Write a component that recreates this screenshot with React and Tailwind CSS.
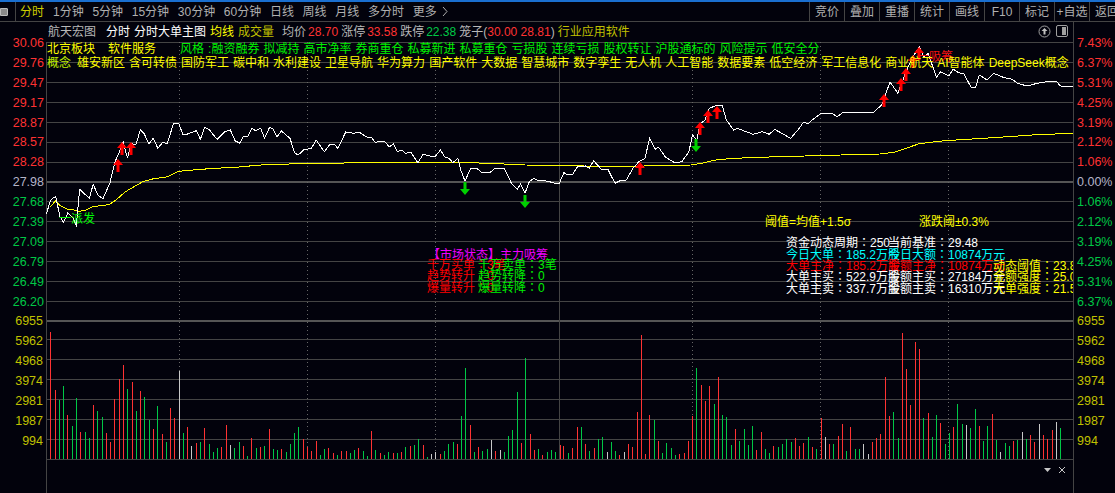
import React from "react";

const P1 = [[130,282],[140,245],[146,236],[156,230],[168,290],[178,307],[190,278],[203,292],[214,316],[223,208],[250,235],[261,193],[274,225],[288,236],[308,188],[322,125],[333,100],[345,65],[357,115],[367,70],[380,75],[393,30],[404,42],[417,72],[429,55],[442,85],[456,66],[468,72],[486,10],[500,10],[513,45],[525,42],[550,32],[561,58],[573,22],[585,28],[608,58],[630,35],[645,30],[658,62],[672,70],[681,50],[693,50],[705,25],[716,32],[730,25],[741,55],[755,22],[765,28],[776,50],[788,33],[812,55],[825,98],[835,105],[850,90],[872,85],[885,60],[908,95],[922,75],[935,72],[946,85],[968,36],[990,40],[1005,36],[1030,53],[1040,52],[1050,67],[1075,63],[1090,80],[1102,72],[1113,95],[1125,90],[1135,100],[1150,96],[1170,128],[1185,103],[1205,108],[1220,108],[1233,90],[1245,110],[1258,116],[1268,128],[1282,115],[1290,150],[1302,183],[1318,145],[1335,145],[1350,158],[1372,158],[1385,145],[1412,145],[1432,190],[1448,208],[1458,192],[1470,220],[1482,185],[1495,175],[1510,183],[1525,182],[1545,187],[1560,192]];
const P2 = [[12,190],[25,158],[35,165],[50,162],[63,140],[85,138],[96,145],[108,122],[130,148],[148,148],[168,190],[182,182],[200,180],[218,145],[235,125],[252,115],[265,55],[280,88],[290,82],[310,112],[335,128],[355,125],[375,95],[385,45],[397,60],[406,12]];
const P3 = [[420,360],[432,325],[450,317],[468,316],[480,360],[500,390],[510,385],[555,403],[580,395],[600,403],[615,388],[660,415],[680,390],[695,368],[710,370],[720,360],[745,340],[775,340],[790,350],[805,338],[890,338],[915,315],[938,246],[960,280],[965,265],[985,210],[1000,175],[1020,140],[1032,172],[1045,160],[1068,232],[1080,215],[1103,228],[1115,207],[1130,218],[1145,222],[1165,262],[1178,262],[1188,225],[1210,240],[1228,220],[1255,232],[1280,238],[1295,250],[1322,258],[1350,250],[1385,244],[1405,245],[1415,258],[1450,259]];
const A1 = [[140,262],[155,243],[170,258],[190,268],[205,269],[220,274],[240,271],[260,260],[280,257],[305,254],[325,240],[350,216],[375,200],[400,185],[430,176],[470,170],[500,154],[530,151],[600,145],[660,142],[720,136],[760,133],[860,131],[1010,128],[1270,127],[1370,130],[1470,135],[1560,136]];
const A2 = [[0,136],[160,140],[220,140],[250,138],[380,135],[410,130],[450,120],[500,115],[600,111],[700,108],[800,105],[910,102],[950,97],[1020,71],[1090,62],[1200,55],[1350,44],[1450,40]];

const toL = ([x, y]) => [x / 2.8, 120 + y / 3];
const toR = ([x, y]) => [555 + x / 2.8, 120 + y / 3];
const toT = ([x, y]) => [555 + x / 2.8, y / 3];
const pts = (a) => a.map(([x, y]) => `${x.toFixed(1)},${y.toFixed(1)}`).join(" ");
const price = [...P1.map(toL), ...P2.map(toR), ...P3.map(toT)];
const avg = [...A1.map(toL), ...A2.map(toR)];

const V1 = "141r66 155r240 166g270 177g228 188r315 202g348 214g264 225r366 239g366 250g384 261r285 272g303 286g321 297r369 309r396 320r267 334r207 345r165 356g237 370r216 382g303 393r243 404g261 418g330 429r357 441g288 454r372 466g396 477r294 488r324 502w183 513g369 524r351 536w408 550r399 561g396 572r354 586g402 597g426 608g414 620r411 634r345 645w405 657g414 670g396 681r408 692g438 704r384 718g414 729r411 740g408 754r357 765g417 776g420 788r417 802g426 813g402 824g369 835g351 849r387 860r411 872r423 885r393 897g435 908g417 919r414 933r429 945g435 956r423 970r423 981g429 992g420 1003r414 1017g423 1028g438 1040r363 1051g420 1065r429 1076g435 1087g426 1101r429 1112g429 1124r426 1135g411 1149r408 1160g405 1171g387 1185r405 1196g441 1208w432 1219w426 1233r432 1244g423 1255g402 1269g396 1280r402 1291g318 1303g174 1317r345 1328g426 1339r411 1350g423 1364g417 1376w390 1387r423 1401w420 1412g426 1423g378 1434g360 1448g246 1460r399 1471g144 1485r372 1496r420 1507g417 1518r435 1532g426 1543g420";
const V2 = "0g426 14r405 25r408 37g429 48r414 62r351 73g351 85r402 96g423 110r414 121g387 132g381 146w426 157g396 169g423 180r435 194w426 205r402 216r411 230r306 242r75 253r432 264r315 278g330 289r393 300g429 312g399 326g414 337g435 348r432 362r429 373r393 385r318 396g174 410r225 421r273 432r228 446g282 457r201 468g315 480g321 494g405 505r357 516g393 530g357 541g405 552g348 564r420 578r366 589g417 600g429 611r408 625g411 636g402 648g387 661g396 673r384 684r408 695r399 709g381 720r411 732g417 746r324 757w381 768r402 779g402 793r378 804r342 815g423 827r351 841g417 852g417 863w402 877w432 888r396 899r384 911r372 925r201 936r318 947g306 961g384 972r69 984r177 995r285 1009r96 1020r117 1031g324 1045r309 1056g381 1067g315 1079r339 1093g402 1104g369 1115r351 1126g282 1140g342 1152w345 1163g354 1177g297 1188r348 1199g393 1210g348 1224r312 1235g390 1247w426 1261g399 1272g408 1283r393 1294g390 1308w366 1320g387 1331r375 1342r396 1356w342 1367r375 1378r387 1392r360 1403w336 1415g354 1451w291";
const COL = { r: "#ff3232", g: "#00c846", w: "#c8c8c8" };
const parse = (s, off) =>
  s.split(" ").map((t) => {
    const m = t.match(/(\d+)([rgw])(\d+)/);
    return { x: Math.floor(off + +m[1] / 2.8), y: 310 + +m[3] / 3, c: COL[m[2]] };
  });
const bars = [...parse(V1, 0), ...parse(V2, 555)];

const upArrows = [[118,159],[122,142],[131,142],[640,162],[700,122],[708,110],[717,106],[884,94],[901,78],[906,68],[913,55],[919,47]];
const downArrows = [[465,182],[525,195],[696,139]];

const hLines = [42,62,82,102,122,142,162,201,221,241,261,281,301,339,359,379,399,419,439,459];
const dotted = [179,307,435,692,820,948];

function Chart() {
  return (
    <svg className="absolute inset-0" width="1027" height="451" viewBox="46 42 1027 451">
      <g shapeRendering="crispEdges">
        {hLines.map((y) => (
          <line key={y} x1="46" x2="1073" y1={y + 0.5} y2={y + 0.5} stroke="#444444" />
        ))}
        <rect x="46" y="181" width="1027" height="2" fill="#555555" />
        <rect x="46" y="320" width="1027" height="2" fill="#555555" />
        <line x1="46.5" x2="46.5" y1="42" y2="493" stroke="#444444" />
        <line x1="559.5" x2="559.5" y1="42" y2="459" stroke="#444444" />
        {dotted.map((x) => (
          <line key={x} x1={x + 0.5} x2={x + 0.5} y1="42" y2="459" stroke="#666666" strokeDasharray="1 3" />
        ))}
        {bars.map((b, i) => (
          <rect key={i} x={b.x} y={b.y} width="1" height={459 - b.y} fill={b.c} />
        ))}
      </g>
      <polyline points={pts(avg)} fill="none" stroke="#ffff00" strokeWidth="1" shapeRendering="crispEdges" />
      <polyline points={pts(price)} fill="none" stroke="#ffffff" strokeWidth="1" shapeRendering="crispEdges" />
      {upArrows.map(([x, y], i) => (
        <path key={i} d={`M${x} ${y}l5 6h-3.500v7h-3v-7h-3.500z`} fill="#ff0000" />
      ))}
      {downArrows.map(([x, y], i) => (
        <path key={i} d={`M${x - 1.5} ${y}h3v7h3.500l-5 6l-5-6h3.500z`} fill="#00d000" />
      ))}
    </svg>
  );
}

const tabs = ["1分钟", "5分钟", "15分钟", "30分钟", "60分钟", "日线", "周线", "月线", "多分时", "更多"];
const tools = ["竞价", "叠加", "重播", "统计", "画线", "F10", "标记", "+自选", "返回"];
const leftPrices = [
  ["30.06", "text-[#ff3232]"], ["29.76", "text-[#ff3232]"], ["29.47", "text-[#ff3232]"], ["29.17", "text-[#ff3232]"],
  ["28.87", "text-[#ff3232]"], ["28.57", "text-[#ff3232]"], ["28.28", "text-[#ff3232]"], ["27.98", "text-[#b4b4c8]"],
  ["27.68", "text-[#00c846]"], ["27.39", "text-[#00c846]"], ["27.09", "text-[#00c846]"], ["26.79", "text-[#00c846]"],
  ["26.49", "text-[#00c846]"], ["26.20", "text-[#00c846]"],
];
const rightPrices = [
  ["7.43%", "text-[#ff3232]"], ["6.37%", "text-[#ff3232]"], ["5.31%", "text-[#ff3232]"], ["4.25%", "text-[#ff3232]"],
  ["3.19%", "text-[#ff3232]"], ["2.12%", "text-[#ff3232]"], ["1.06%", "text-[#ff3232]"], ["0.00%", "text-[#b4b4c8]"],
  ["1.06%", "text-[#00c846]"], ["2.12%", "text-[#00c846]"], ["3.19%", "text-[#00c846]"], ["4.25%", "text-[#00c846]"],
  ["5.31%", "text-[#00c846]"], ["6.37%", "text-[#00c846]"],
];
const vols = ["6955", "5962", "4968", "3974", "2981", "1987", "994"];

const row1 = ["风格", ":融资融券", "拟减持", "高市净率", "券商重仓", "私募新进", "私募重仓", "亏损股", "连续亏损", "股权转让", "沪股通标的", "风险提示", "低安全分"];
const row2 = ["雄安新区", "含可转债", "国防军工", "碳中和", "水利建设", "卫星导航", "华为算力", "国产软件", "大数据", "智慧城市", "数字孪生", "无人机", "人工智能", "数据要素", "低空经济", "军工信息化", "商业航天", "AI智能体", "DeepSeek概念"];

const notes = [
  ["一派发", "left-[13px] top-[170px] text-[#00ff00]"],
  ["一吸筹", "left-[871px] top-[8px] text-[#f01010]"],
  ["阈值=均值+1.5σ", "left-[719px] top-[173px] text-[#ffff00]"],
  ["涨跌阈±0.3%", "left-[873px] top-[173px] text-[#ffff00]"],
  ["【市场状态】主力吸筹", "left-[382px] top-[206px] text-[#f000ff]"],
  ["千万买单：3笔", "left-[381px] top-[216px] text-[#ff0000]"],
  ["千万卖单：3笔", "left-[432px] top-[216px] text-[#00f000]"],
  ["趋势转升：0", "left-[381px] top-[227px] text-[#ff0000]"],
  ["趋势转降：0", "left-[432px] top-[227px] text-[#00f000]"],
  ["爆量转升：0", "left-[381px] top-[239px] text-[#ff0000]"],
  ["爆量转降：0", "left-[432px] top-[239px] text-[#00f000]"],
  ["资金动态周期：250", "left-[740px] top-[194px] text-[#ffffff]"],
  ["当前基准：29.48", "left-[842px] top-[194px] text-[#ffffff]"],
  ["今日大单：185.2万股", "left-[740px] top-[206px] text-[#00ffff]"],
  ["今日大额：10874万元", "left-[842px] top-[206px] text-[#00ffff]"],
  ["大单主净：185.2万股", "left-[740px] top-[217px] text-[#ff0000]"],
  ["金额主净：10874万元", "left-[842px] top-[217px] text-[#ff0000]"],
  ["大单主买：522.9万股", "left-[740px] top-[228px] text-[#ffffff]"],
  ["金额主买：27184万元", "left-[842px] top-[228px] text-[#ffffff]"],
  ["大单主卖：337.7万股", "left-[740px] top-[240px] text-[#ffffff]"],
  ["金额主卖：16310万元", "left-[842px] top-[240px] text-[#ffffff]"],
  ["动态阈值：23.80", "left-[947px] top-[217px] text-[#ffff00]"],
  ["金额强度：25.00", "left-[947px] top-[228px] text-[#ffff00]"],
  ["大单强度：21.50", "left-[947px] top-[240px] text-[#ffff00]"],
];

export default function App() {
  return (
    <div className="w-[1115px] h-[493px] overflow-hidden bg-[#02020c] text-[12px] font-['Liberation_Sans','Noto_Sans_CJK_SC',sans-serif] flex flex-col">
      <div className="h-[2px] shrink-0 bg-[#1a6fd0]" />
      <div className="h-[20px] shrink-0 flex items-center border-b border-[#444444] text-[#b0b0b0] relative">
        <div className="w-[8px] h-[8px] bg-[#8a8a8a] border border-[#bbbbbb] rounded-r-[1px] shrink-0" />
        <div className="w-px h-full bg-[#444444] ml-[7px] shrink-0" />
        <span className="ml-[4px] text-[#d0d000]">分时</span>
        <div className="flex items-center gap-[8.7px] ml-[9px]">
          {tabs.map((t) => (
            <span key={t}>{t}</span>
          ))}
        </div>
        <svg className="ml-[5px]" width="6" height="11" viewBox="0 0 6 11">
          <path d="M1 1l4 4.500-4 4.500" fill="none" stroke="#b0b0b0" />
        </svg>
        <div className="ml-auto flex h-full w-[306px] shrink-0 overflow-hidden border-l border-[#444444]">
          {tools.map((t) => (
            <div key={t} className="w-[35px] shrink-0 flex items-center justify-center border-r border-[#444444]">
              <span className="whitespace-nowrap">{t}</span>
            </div>
          ))}
        </div>
      </div>
      <div className="flex flex-1 min-h-0">
        <div className="w-[46px] shrink-0 flex flex-col pt-[12px] text-[12.5px] whitespace-nowrap">
          {leftPrices.map(([v, c]) => (
            <div key={v} className={`h-[19.9px] leading-[19.9px] text-right pr-[2px] ${c}`}>{v}</div>
          ))}
          {vols.map((v) => (
            <div key={v} className="h-[19.9px] leading-[19.9px] text-right pr-[3px] text-[#c0c000]">{v}</div>
          ))}
        </div>
        <div className="w-[1027px] shrink-0 flex flex-col">
          <div className="h-[20px] shrink-0 flex items-center pl-[2px] text-[#b8b8b8] whitespace-nowrap relative">
            <span>航天宏图</span>
            <span className="ml-[10px] text-[#ffffff]">分时</span>
            <span className="ml-[4px] text-[#ffffff]">分时大单主图</span>
            <span className="ml-[4px] text-[#ffff00]">均线</span>
            <span className="ml-[4px] text-[#c0c000]">成交量</span>
            <span className="ml-[8px]">均价</span>
            <span className="ml-[2px] text-[#ff3232]">28.70</span>
            <span className="ml-[3px]">涨停</span>
            <span className="ml-[2px] text-[#ff3232]">33.58</span>
            <span className="ml-[3px]">跌停</span>
            <span className="ml-[2px] text-[#00c846]">22.38</span>
            <span className="ml-[3px]">笼子(</span>
            <span className="text-[#ff3232]">30.00 28.81</span>
            <span>)</span>
            <span className="ml-[3px] text-[#c0c000]">行业应用软件</span>
            <svg className="absolute left-[992px] top-[3px]" width="13" height="13" viewBox="0 0 13 13">
              <circle cx="6.500" cy="6.500" r="5.500" fill="none" stroke="#a0a0a0" />
              <path d="M6.500 3l3 3h-2v3.500h-2v-3.500h-2z" fill="#c0c0c0" />
            </svg>
            <div className="absolute left-[1010px] top-[3px] w-[12px] h-[12px] border border-[#a0a0a0] rounded-[2px] flex justify-end p-px">
              <div className="w-[4px] bg-[#a0a0a0]" />
            </div>
          </div>
          <div className="relative flex-1 min-h-0 overflow-hidden">
            <Chart />
            <div className="font-['Liberation_Sans','Noto_Sans_CJK_TC',sans-serif]">
              {notes.map(([t, c]) => (
                <span key={t} className={`absolute whitespace-nowrap leading-[14px] ${c}`}>{t}</span>
              ))}
            </div>
            <div className="absolute left-[1px] top-[1px] w-[1026px] flex flex-col leading-[13px] whitespace-nowrap">
              <div className="flex gap-[4px] text-[#00f000]">
                <span className="text-[#ffff00]">北京板块</span>
                <span className="ml-[9px] mr-[20px] text-[#ffff00]">软件服务</span>
                {row1.map((t) => (
                  <span key={t}>{t}</span>
                ))}
              </div>
              <div className="flex gap-[4px] text-[#ffff00] mt-px">
                <span className="mr-[2px] text-[#c0f000]">概念</span>
                {row2.map((t) => (
                  <span key={t}>{t}</span>
                ))}
              </div>
            </div>
            <svg className="absolute left-[996px] top-[424px]" width="30" height="10" viewBox="0 0 30 10">
              <path d="M2 2h7l-3.500 4z" fill="#c8c8c8" />
              <path d="M17 1l6 6M23 1l-6 6" stroke="#c8c8c8" fill="none" />
            </svg>
          </div>
        </div>
        <div className="flex-1 border-l border-[#444444] flex flex-col pt-[12px] pl-[3px] text-[12.5px] whitespace-nowrap">
          {rightPrices.map(([v, c], i) => (
            <div key={i} className={`h-[19.9px] leading-[19.9px] ${c}`}>{v}</div>
          ))}
          {vols.map((v) => (
            <div key={v} className="h-[19.9px] leading-[19.9px] text-[#c0c000]">{v}</div>
          ))}
        </div>
      </div>
    </div>
  );
}
